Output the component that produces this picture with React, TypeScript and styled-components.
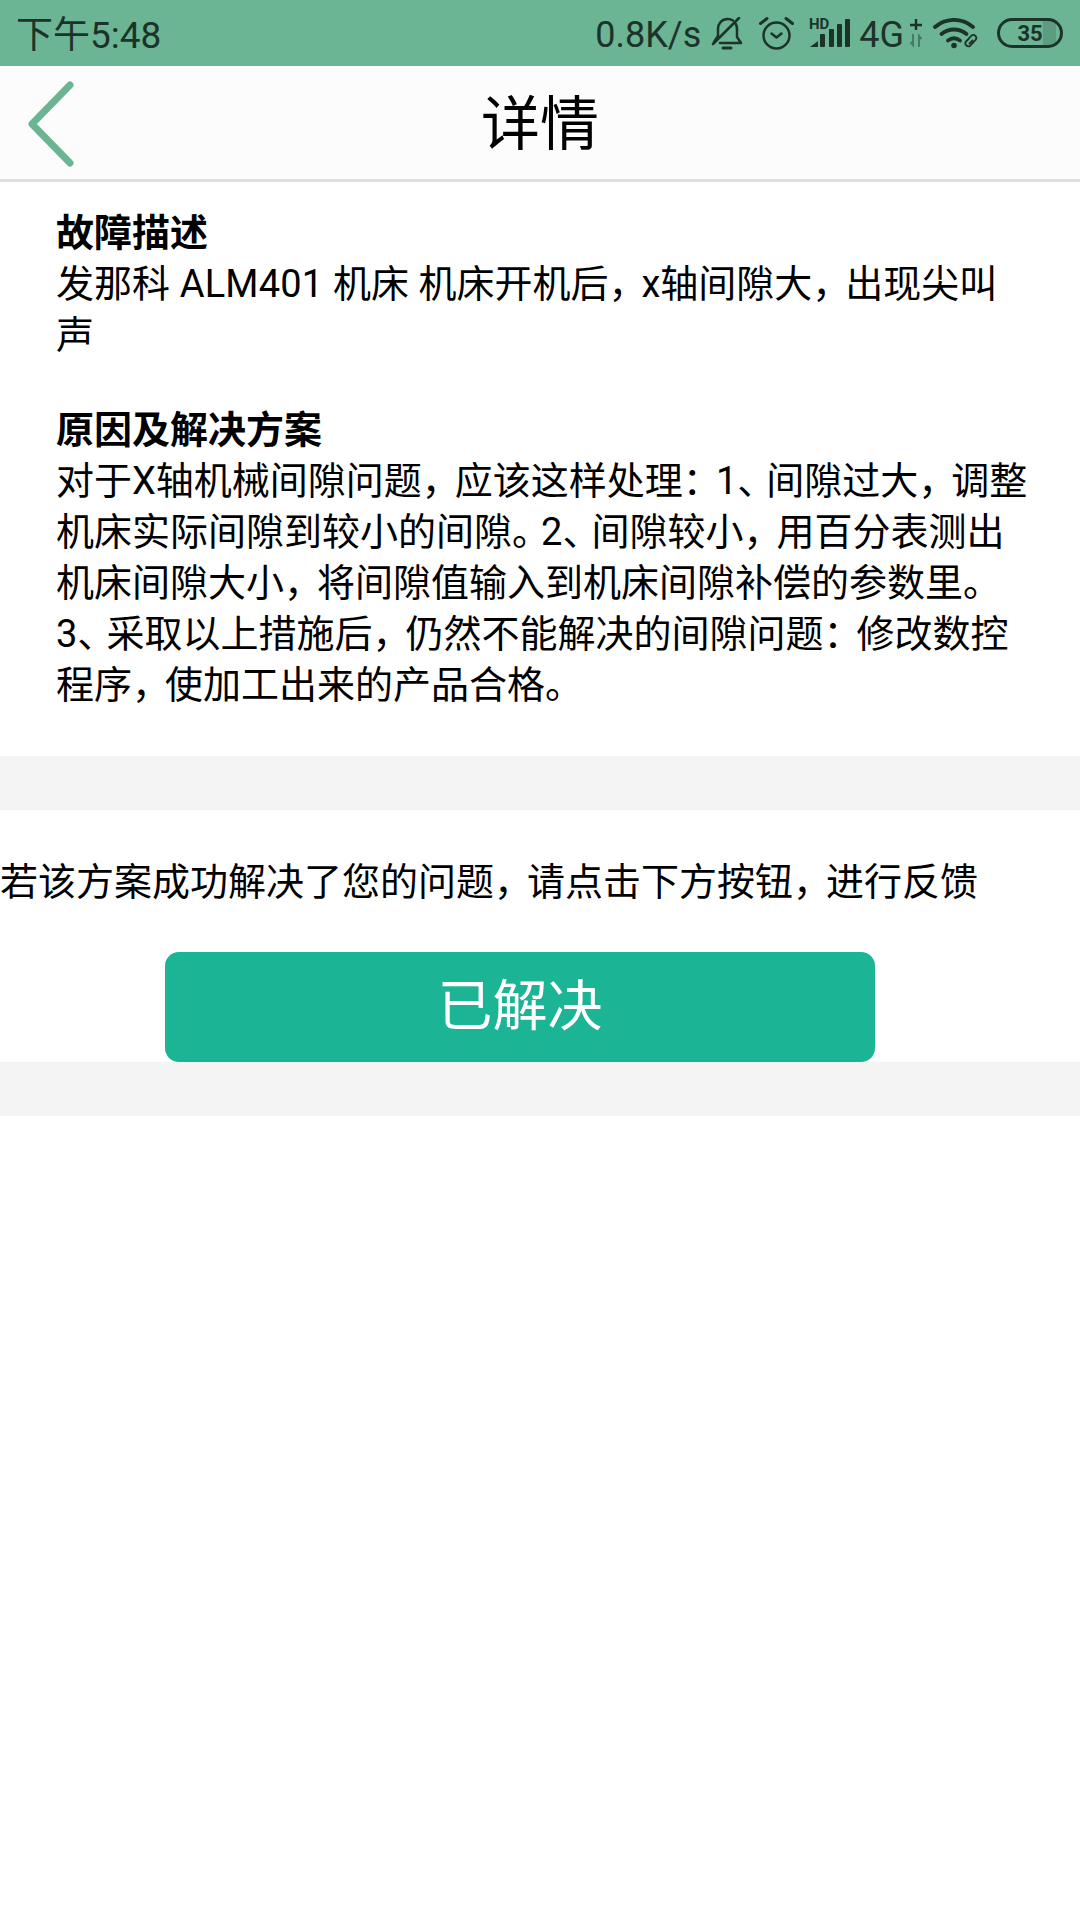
import styled, { createGlobalStyle } from "styled-components";

const INK = "#1d3329";

const Global = createGlobalStyle`
    html, body {
        margin: 0;
        padding: 0;
        background: #fff;
    }
    * {
        box-sizing: border-box;
    }
`;
const Page = styled.div`
    width: 1080px;
    height: 1920px;
    overflow: hidden;
    background: #fff;
    font-family: "Roboto", "Noto Sans CJK SC", sans-serif;
    color: #000;
`;
const StatusBar = styled.div`
    height: 66px;
    background: #6bb594;
    color: ${INK};
    display: flex;
    align-items: center;
    padding: 0 17px 0 16px;
`;
const Clock = styled.div`
    flex: 1;
    font-size: 37px;
    margin-top: -2px;
`;
const StatusRight = styled.div`
    display: flex;
    align-items: center;
`;
const Slot = styled.div<{ $gap: number }>`
    display: flex;
    align-items: center;
    margin-left: ${(p) => p.$gap}px;
`;
const Speed = styled.span`
    font-size: 36px;
    line-height: 40px;
    padding-top: 3px;
`;
const SignalSvg = styled.svg`
    margin-top: -4px;
`;
const NavBar = styled.div`
    height: 116px;
    background: #fcfcfc;
    border-bottom: 3px solid #dfdee3;
    display: flex;
    align-items: center;
    justify-content: center;
    position: relative;
`;
const BackIcon = styled.svg`
    position: absolute;
    left: 26px;
    top: 15px;
`;
const Title = styled.div`
    font-size: 59px;
    line-height: 1;
    margin-top: 4px;
`;
const Detail = styled.div`
    padding: 26px 50px 45px 56px;
    font-size: 38px;
    line-height: 51px;
`;
const Heading = styled.div`
    font-weight: 700;
`;
const Para = styled.div`
    margin-bottom: 44px;
    &:last-child {
        margin-bottom: 0;
    }
`;
const Line = styled.div`
    white-space: nowrap;
`;
const Latin = styled.span`
    letter-spacing: 0.2px;
`;
/* the phone's font sets CJK punctuation tighter than full width */
const Mark = styled.span`
    letter-spacing: -5px;
`;
const Stop = styled.span`
    letter-spacing: -9px;
`;
const Gap = styled.div`
    height: 54px;
    background: #f4f4f4;
`;
const Feedback = styled.div`
    padding-top: 47px;
    font-size: 38px;
    line-height: 51px;
`;
const ResolveButton = styled.button`
    display: block;
    width: 710px;
    height: 110px;
    margin: 44px 0 0 165px;
    border: none;
    border-radius: 14px;
    background: #1bb495;
    color: #fff;
    font-family: inherit;
    font-size: 55px;
    padding: 0 0 12px;
`;
const Battery = styled.div`
    width: 66px;
    height: 30px;
    border: 3px solid ${INK};
    border-radius: 15px;
    font-size: 22px;
    font-weight: 700;
    display: flex;
    align-items: center;
    justify-content: center;
    background: linear-gradient(90deg, #6bb594 0 72%, #5c9c80 72% 93%, #6bb594 93%);
`;

function BellOff() {
    return (
        <svg width="32" height="33" viewBox="0 0 32 33" fill="none" stroke={INK} strokeWidth="2.500" strokeLinecap="round" strokeLinejoin="round">
            <path d="M9 26h21l-4-6v-8c0-2-.500-4-1.500-5.500" />
            <path d="M22 3.500C20.500 2.500 18.500 2 16.500 2 11 2 7 6.500 7 12v7l-4 6" />
            <path d="M28 1 2 27" />
            <path d="M12 31h8" strokeWidth="3" />
        </svg>
    );
}

function Alarm() {
    return (
        <svg width="35" height="34" viewBox="0 0 35 34" fill="none" stroke={INK} strokeWidth="2.500" strokeLinecap="round" strokeLinejoin="round">
            <circle cx="17.500" cy="19.500" r="13" />
            <path d="M12.500 17.500l5 4 5-4" />
            <path d="M1.500 7.500l6.500-5M33.500 7.500l-6.500-5" strokeWidth="3" />
        </svg>
    );
}

function Signal() {
    return (
        <SignalSvg width="42" height="34" viewBox="0 -3 42 34">
            <text x="0" y="11.500" fontSize="15" fontWeight="700" fontFamily="Roboto" fill={INK}>HD</text>
            <g fill={INK}>
                <path d="M1 30l8-6v6z" />
                <rect x="11" y="17" width="5" height="13" rx="1" />
                <rect x="20" y="12" width="5" height="18" rx="1" />
                <rect x="28" y="7" width="5" height="23" rx="1" />
                <rect x="36" y="2" width="5" height="28" rx="1" />
            </g>
        </SignalSvg>
    );
}

function Network() {
    return (
        <svg width="14" height="30" viewBox="0 0 14 30" fill="none" stroke={INK} strokeWidth="2.400">
            <path d="M7 1v11M1 7h12" />
            <path d="M4 16v11l-2.500-3M10 29V18l2.500 3" strokeWidth="2" opacity="0.45" />
        </svg>
    );
}

function Wifi() {
    return (
        <svg width="47" height="31" viewBox="0 0 47 31" fill="none" stroke={INK} strokeLinecap="round" strokeLinejoin="round">
            <path d="M2 9c11-9.500 27-9.500 38 0" strokeWidth="3.800" />
            <path d="M8.500 16c7.500-6 17.500-6 25 0" strokeWidth="3.800" />
            <path d="M15 22.500c4-3 8-3 12 0" strokeWidth="3.800" />
            <circle cx="21" cy="27.500" r="2.800" fill={INK} stroke="none" />
            <path d="M35.500 21l-2.500 2.500a3 3 0 0 0 4.200 4.200l2.500-2.500" strokeWidth="1.800" />
            <path d="M40 24.500l2.700-2.700a3 3 0 0 0-4.200-4.200l-2.700 2.700" strokeWidth="1.800" />
            <path d="M36.500 25.500l3-3" strokeWidth="1.800" />
        </svg>
    );
}

const COMMA = "\uFF0C";
const COLON = "\uFF1A";

export default function App() {
    return (
        <Page>
            <Global />
            <StatusBar>
                <Clock>下午5:48</Clock>
                <StatusRight>
                    <Speed>0.8K/s</Speed>
                    <Slot $gap={10}><BellOff /></Slot>
                    <Slot $gap={16}><Alarm /></Slot>
                    <Slot $gap={15}><Signal /></Slot>
                    <Slot $gap={8}><Speed>4G</Speed></Slot>
                    <Slot $gap={5}><Network /></Slot>
                    <Slot $gap={10}><Wifi /></Slot>
                    <Slot $gap={17}><Battery>35</Battery></Slot>
                </StatusRight>
            </StatusBar>
            <NavBar>
                <BackIcon width="52" height="86" viewBox="0 0 52 86" fill="none" stroke="#6bb594" strokeWidth="7" strokeLinecap="round" strokeLinejoin="round">
                    <path d="M44 4 6 43l38 39" />
                </BackIcon>
                <Title>详情</Title>
            </NavBar>
            <Detail>
                <Para>
                    <Heading>故障描述</Heading>
                    <Line>发那科<Latin> ALM401 </Latin>机床 机床开机后<Mark>{COMMA}</Mark>x轴间隙大<Mark>{COMMA}</Mark>出现尖叫</Line>
                    <Line>声</Line>
                </Para>
                <Para>
                    <Heading>原因及解决方案</Heading>
                    <Line>对于X轴机械间隙问题<Mark>{COMMA}</Mark>应该这样处理<Mark>{COLON}</Mark>1<Stop>、</Stop>间隙过大<Mark>{COMMA}</Mark>调整</Line>
                    <Line>机床实际间隙到较小的间隙<Stop>。</Stop>2<Stop>、</Stop>间隙较小<Mark>{COMMA}</Mark>用百分表测出</Line>
                    <Line>机床间隙大小<Mark>{COMMA}</Mark>将间隙值输入到机床间隙补偿的参数里<Stop>。</Stop></Line>
                    <Line>3<Stop>、</Stop>采取以上措施后<Mark>{COMMA}</Mark>仍然不能解决的间隙问题<Mark>{COLON}</Mark>修改数控</Line>
                    <Line>程序<Mark>{COMMA}</Mark>使加工出来的产品合格<Stop>。</Stop></Line>
                </Para>
            </Detail>
            <Gap />
            <Feedback>若该方案成功解决了您的问题<Mark>{COMMA}</Mark>请点击下方按钮<Mark>{COMMA}</Mark>进行反馈</Feedback>
            <ResolveButton>已解决</ResolveButton>
            <Gap />
        </Page>
    );
}
